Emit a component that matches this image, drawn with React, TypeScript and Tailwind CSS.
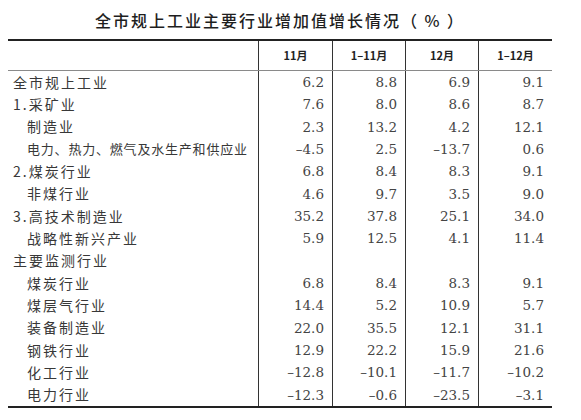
import React from 'react'

type Row = {
	label: string
	indent?: boolean
	tight?: boolean
	values?: string[]
}

const rows: Row[] = [
	{ label: '全市规上工业', values: ['6.2', '8.8', '6.9', '9.1'] },
	{ label: '1.采矿业', values: ['7.6', '8.0', '8.6', '8.7'] },
	{ label: '制造业', indent: true, values: ['2.3', '13.2', '4.2', '12.1'] },
	{
		label: '电力、热力、燃气及水生产和供应业',
		indent: true,
		tight: true,
		values: ['–4.5', '2.5', '–13.7', '0.6'],
	},
	{ label: '2.煤炭行业', values: ['6.8', '8.4', '8.3', '9.1'] },
	{ label: '非煤行业', indent: true, values: ['4.6', '9.7', '3.5', '9.0'] },
	{ label: '3.高技术制造业', values: ['35.2', '37.8', '25.1', '34.0'] },
	{ label: '战略性新兴产业', indent: true, values: ['5.9', '12.5', '4.1', '11.4'] },
	{ label: '主要监测行业' },
	{ label: '煤炭行业', indent: true, values: ['6.8', '8.4', '8.3', '9.1'] },
	{ label: '煤层气行业', indent: true, values: ['14.4', '5.2', '10.9', '5.7'] },
	{ label: '装备制造业', indent: true, values: ['22.0', '35.5', '12.1', '31.1'] },
	{ label: '钢铁行业', indent: true, values: ['12.9', '22.2', '15.9', '21.6'] },
	{ label: '化工行业', indent: true, values: ['–12.8', '–10.1', '–11.7', '–10.2'] },
	{ label: '电力行业', indent: true, values: ['–12.3', '–0.6', '–23.5', '–3.1'] },
]

const headers = ['11月', '1–11月', '12月', '1–12月']
const colWidths = ['w-[74px]', 'w-[73px]', 'w-[73px]', 'w-[74px]']

const App = () => {
	return (
		<div className="w-[581px] h-[420px] bg-white">
			<div className="h-[39px] w-[544px] ml-2 flex items-center justify-center">
				<h1 className="font-['Noto_Sans_CJK_SC',sans-serif] text-[16px] font-medium tracking-[2px] text-[#1e1e1e] leading-none">
					全市规上工业主要行业增加值增长情况（ % ）
				</h1>
			</div>

			<div className="ml-2 w-[544px] border-t-2 border-b-2 border-[#222]">
				<div className="flex h-[30px] border-b border-[#8a8a8a]">
					<div className="w-[250px]" />
					{headers.map((h, i) => (
						<div
							key={h}
							className={`${colWidths[i]} border-l border-[#333] flex items-center justify-center font-['Noto_Sans_CJK_SC',sans-serif] text-[11px] font-bold text-[#222]`}
						>
							{h}
						</div>
					))}
				</div>

				{rows.map((row) => (
					<div key={row.label + (row.indent ? 'i' : '')} className="flex h-[22.33px]">
						<div
							className={`w-[250px] flex items-center font-['Noto_Sans_CJK_SC',serif] text-[#383838] whitespace-nowrap ${
								row.indent ? 'pl-[19px]' : 'pl-[5px]'
							} ${row.tight ? 'text-[13px] tracking-[0.8px]' : 'text-[14px] tracking-[2px]'}`}
						>
							{row.label}
						</div>
						{colWidths.map((w, i) => (
							<div
								key={w + i}
								className={`${w} border-l border-[#333] flex items-center justify-end pr-2 font-['DejaVu_Serif',serif] text-[13.5px] text-[#444]`}
							>
								{row.values ? row.values[i] : ''}
							</div>
						))}
					</div>
				))}
			</div>
		</div>
	)
}

export default App
